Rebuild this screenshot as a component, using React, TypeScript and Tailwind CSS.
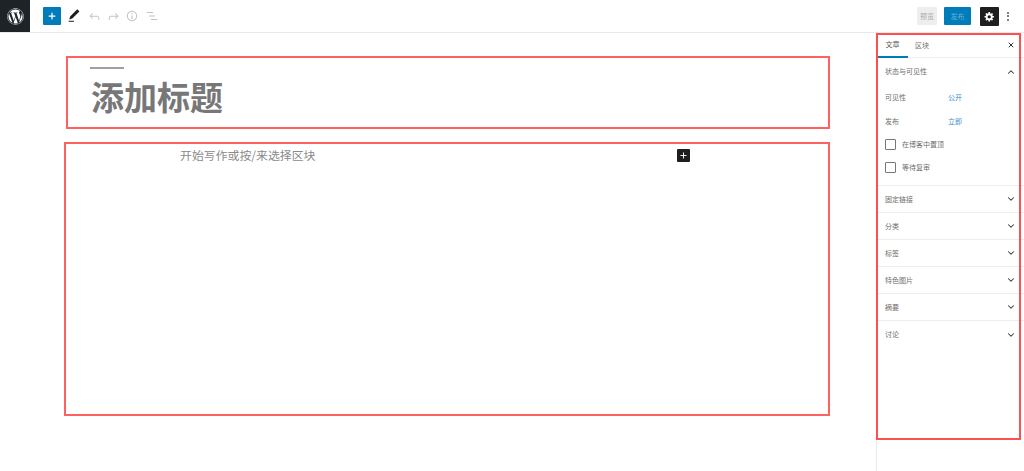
import { FaWordpress } from "react-icons/fa";
import { ChevronDown, ChevronUp, Plus, X } from "lucide-react";

const PANELS = ["固定链接", "分类", "标签", "特色图片", "摘要", "讨论"];

function ToolIcon({ d, className }: { d: string; className: string }) {
  return (
    <svg viewBox="0 0 24 24" className={className} fill="currentColor">
      <path d={d} />
    </svg>
  );
}

function TopBar() {
  return (
    <header className="flex h-[33px] shrink-0 items-center border-b border-[#e8e9ea] pr-[15px]">
      <div className="flex h-[32px] w-[30px] items-center justify-center self-start bg-[#1e2327] text-white">
        <FaWordpress className="h-[17px] w-[17px]" />
      </div>
      <button className="ml-[13px] flex h-[18px] w-[18px] items-center justify-center rounded-[1px] bg-[#007cba] text-white">
        <Plus className="h-[10px] w-[10px]" strokeWidth={3} />
      </button>
      <ToolIcon
        className="ml-[5px] h-[16px] w-[16px] text-[#1e1e1e]"
        d="M20.1 5.1L16.9 2 6.2 12.7l-1.3 4.4 4.5-1.3L20.1 5.1zM4 20.8h8v-1.5H4v1.5z"
      />
      <ToolIcon
        className="ml-[5px] h-[15px] w-[15px] text-[#c4c4c4]"
        d="M18.3 11.7c-.6-.6-1.4-.9-2.3-.9H6.7l2.9-3.3-1.1-1-4.5 5L8.5 16l1-1-2.7-2.7H16c.5 0 .9.2 1.3.5 1 1 1 3.4 1 4.5v.3h1.5v-.2c0-1.5 0-4.3-1.5-5.7z"
      />
      <ToolIcon
        className="ml-[4px] h-[15px] w-[15px] text-[#c4c4c4]"
        d="M15.6 6.5l-1.1 1 2.9 3.3H8c-.9 0-1.7.3-2.3.9-1.4 1.5-1.4 4.2-1.4 5.6v.2h1.5v-.3c0-1.1 0-3.5 1-4.5.3-.3.7-.5 1.3-.5h9.2L14.5 15l1.1 1.1 4.6-4.6-4.6-5z"
      />
      <ToolIcon
        className="ml-[4px] h-[14px] w-[14px] text-[#c4c4c4]"
        d="M12 3.2c-4.8 0-8.8 3.9-8.8 8.8 0 4.8 3.9 8.8 8.8 8.8 4.8 0 8.8-3.9 8.8-8.8 0-4.8-4-8.8-8.8-8.8zm0 16c-4 0-7.2-3.3-7.2-7.2C4.8 8 8 4.8 12 4.8s7.2 3.3 7.2 7.2c0 4-3.2 7.2-7.2 7.2zM11 17h2v-6h-2v6zm0-8h2V7h-2v2z"
      />
      <ToolIcon
        className="ml-[6px] h-[14px] w-[14px] text-[#c4c4c4]"
        d="M13.8 5.2H3v1.5h10.8V5.2zm-3.6 12v1.5H21v-1.5H10.2zm7.2-6H6.6v1.5h10.8v-1.5z"
      />

      <div className="ml-auto flex items-center">
        <span className="flex h-[18px] w-[20px] items-center justify-center rounded-[1px] bg-[#eeeeee] text-[7px] text-[#a8a8a8]">
          预览
        </span>
        <span className="ml-[7px] flex h-[18px] w-[27px] items-center justify-center rounded-[1px] bg-[#007cba] text-[7px] text-[#5fb0d8]">
          发布
        </span>
        <span className="ml-[9px] flex h-[19px] w-[19px] items-center justify-center rounded-[1px] bg-[#1e1e1e] text-white">
          <svg viewBox="0 0 20 20" className="h-[11px] w-[11px]" fill="currentColor">
            <path d="M18 12h-2.18c-.17.7-.44 1.35-.81 1.93l1.54 1.54-2.1 2.1-1.54-1.54c-.58.36-1.23.63-1.91.79V19H8v-2.18c-.68-.16-1.33-.43-1.91-.79l-1.54 1.54-2.12-2.12 1.54-1.54c-.36-.58-.63-1.23-.79-1.91H1V9.03h2.17c.16-.7.44-1.35.8-1.94L2.43 5.55l2.1-2.1 1.54 1.54c.58-.37 1.24-.64 1.93-.81V2h3v2.18c.68.16 1.33.43 1.91.79l1.54-1.54 2.12 2.12-1.54 1.54c.36.59.64 1.24.8 1.94H18V12zm-8.5 1.5c1.66 0 3-1.34 3-3s-1.34-3-3-3-3 1.34-3 3 1.34 3 3 3z" />
          </svg>
        </span>
        <span className="ml-[8px] flex h-[9px] w-[2px] flex-col justify-between">
          <i className="h-[2px] w-[2px] rounded-full bg-[#555]" />
          <i className="h-[2px] w-[2px] rounded-full bg-[#555]" />
          <i className="h-[2px] w-[2px] rounded-full bg-[#555]" />
        </span>
      </div>
    </header>
  );
}

function Editor() {
  return (
    <main className="min-w-0 flex-1 pt-[23px]">
      <section className="ml-[66px] mr-[46px] h-[73px] border-2 border-[#ff6060] pl-[22px] pt-[9px]">
        <div className="h-[2px] w-[34px] bg-[#a0a0a0]" />
        <h1 className="ml-px mt-[7px] text-[33px] leading-[40px] font-bold text-[#777777]">添加标题</h1>
      </section>
      <section className="ml-[64px] mr-[46px] mt-[13px] flex h-[274px] items-start border-2 border-[#ff6060] pl-[114px] pt-[2px]">
        <p className="text-[11.9px] leading-[18px] text-[#8a8a8a]">开始写作或按/来选择区块</p>
        <span className="ml-[362px] mt-[3px] flex h-[13px] w-[13px] items-center justify-center rounded-[1px] bg-[#1e1e1e] text-white">
          <Plus className="h-[9px] w-[9px]" strokeWidth={2.5} />
        </span>
      </section>
    </main>
  );
}

function Sidebar() {
  return (
    <aside className="relative w-[148px] shrink-0 border-l border-[#e8e9ea] text-[7px] text-[#6e6e6e]">
      <div className="flex h-[25px] items-center border-b border-[#eeeeee] pr-[9px]">
        <span className="flex h-[25px] w-[31px] items-center justify-center border-b-2 border-[#007cba] text-[#555555]">
          文章
        </span>
        <span className="ml-[7px]">区块</span>
        <X className="ml-auto h-[8px] w-[8px] text-[#333333]" strokeWidth={3} />
      </div>

      <div className="h-[128px] border-b border-[#eeeeee] pl-[8px] pr-[8px]">
        <div className="flex h-[27px] items-center justify-between">
          <span>状态与可见性</span>
          <ChevronUp className="h-[10px] w-[10px] text-[#333333]" strokeWidth={2.5} />
        </div>
        <div className="flex h-[24px] items-center">
          <span className="w-[63px]">可见性</span>
          <span className="text-[#3a8fc4]">公开</span>
        </div>
        <div className="flex h-[24px] items-center">
          <span className="w-[63px]">发布</span>
          <span className="text-[#3a8fc4]">立即</span>
        </div>
        <label className="mt-[6px] flex h-[11px] items-center">
          <i className="h-[11px] w-[11px] rounded-[1px] border border-[#777777]" />
          <span className="ml-[6px]">在博客中置顶</span>
        </label>
        <label className="mt-[12px] flex h-[11px] items-center">
          <i className="h-[11px] w-[11px] rounded-[1px] border border-[#777777]" />
          <span className="ml-[6px]">等待复审</span>
        </label>
      </div>

      {PANELS.map((title, i) => (
        <div
          key={title}
          className={
            i < PANELS.length - 1
              ? "flex h-[27px] items-center justify-between border-b border-[#eeeeee] pl-[8px] pr-[8px]"
              : "flex h-[27px] items-center justify-between pl-[8px] pr-[8px]"
          }
        >
          <span>{title}</span>
          <ChevronDown className="h-[10px] w-[10px] text-[#333333]" strokeWidth={2.5} />
        </div>
      ))}

      {/* red annotation frame over the panel */}
      <div className="pointer-events-none absolute left-[-1px] top-0 h-[407px] w-[145px] border-2 border-[#ff5050]" />
    </aside>
  );
}

export default function App() {
  return (
    <div className="flex h-[471px] w-[1024px] flex-col overflow-hidden bg-white font-['Noto_Sans_CJK_SC','Noto_Sans',sans-serif]">
      <TopBar />
      <div className="flex min-h-0 flex-1">
        <Editor />
        <Sidebar />
      </div>
    </div>
  );
}
